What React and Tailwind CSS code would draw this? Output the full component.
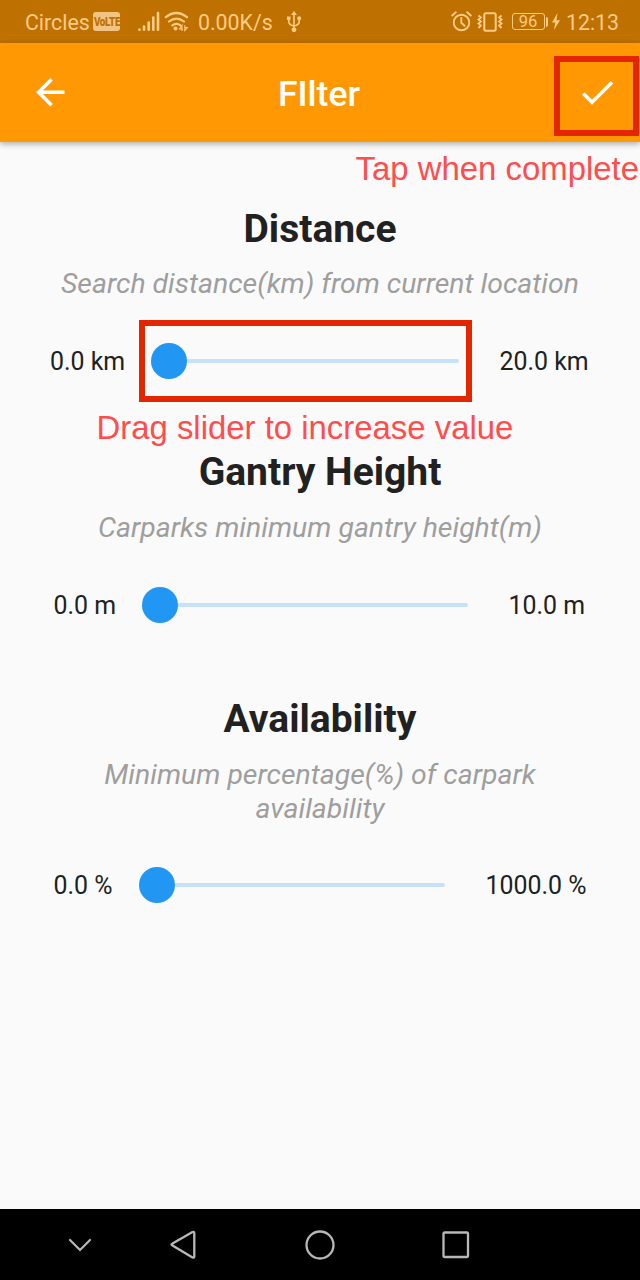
import { MdArrowBack, MdCheck } from 'react-icons/md';

function StatusBar() {
  return (
    <header className="flex h-[43px] shrink-0 items-center bg-[#bf7100] pl-[25px] text-[21.300px] leading-[43px] text-[#ffcb85]">
      <span className="w-[68px] whitespace-nowrap pt-[2px]">Circles</span>
      <span className="flex h-[19px] w-[27px] shrink-0 items-center justify-center rounded-[3px] bg-[#f3c384] text-[#bf7100]">
        <span className="scale-x-[0.82] scale-y-110 text-[12px] font-black leading-none tracking-[-0.4px]">VoLTE</span>
      </span>
      <svg className="ml-[18px] h-[21px] w-[22px] shrink-0" viewBox="0 0 22 21" stroke="currentColor" strokeWidth="2.6" strokeLinecap="round">
        <path d="M1.5 18.5v.3M6 15.5v3.3M10.7 11.5v7.3M15.3 6.5v12.3M20 2v16.8" />
      </svg>
      <svg className="ml-[4px] h-[22px] w-[25px] shrink-0" viewBox="0 0 25 22" fill="none" stroke="currentColor" strokeWidth="2.2" strokeLinecap="round">
        <path d="M1.8 6.2Q12.3-2.2 23 6.2M5 10.5q7.400-5.800 15 0M8.300 14.300q4.100-3 8.200 0" />
        <circle cx="11.500" cy="17.500" r="2" fill="currentColor" stroke="none" />
        <path d="M18 19.500v-5l-2.500 3.500h3M20.800 14.500v5l2.500-3h-2.500" strokeWidth="1.100" />
      </svg>
      <span className="ml-[9px] w-[75px] whitespace-nowrap pt-[2px]">0.00K/s</span>
      <svg className="ml-[13px] h-[22px] w-[16px] shrink-0" viewBox="0 0 16 22" fill="none" stroke="currentColor" strokeWidth="1.6">
        <path d="M8 3v16M2.800 7v3.500q0 3.500 5.200 4.500 5.200-1 5.200-4.500V7" />
        <path d="M8 0l3 4H5zM1 5.500h3.500v3.500H1z" fill="currentColor" stroke="none" />
        <circle cx="13.200" cy="7.300" r="2" fill="currentColor" stroke="none" />
        <circle cx="8" cy="18.800" r="2.400" fill="currentColor" stroke="none" />
      </svg>
      <div className="ml-auto flex items-center pr-[21px]">
        <svg className="h-[21px] w-[21px]" viewBox="0 0 21 21" fill="none" stroke="currentColor" strokeWidth="1.900" strokeLinecap="round">
          <circle cx="10.500" cy="11.500" r="7.800" />
          <path d="M10.300 7v4.800l3.200 3M1.200 4.500l3.600-3.200M19.800 4.500l-3.600-3.200" />
        </svg>
        <svg className="ml-[5px] h-[20px] w-[26px]" viewBox="0 0 26 20" fill="none" stroke="currentColor" strokeWidth="1.900">
          <rect x="7.300" y="1.200" width="11.400" height="17.600" rx="1.500" strokeWidth="2" />
          <path d="M1.500 3.500L3.800 5.500 1.500 7.500l2.300 2-2.300 2 2.300 2-2.300 2.500M24.500 3.500L22.200 5.500l2.300 2-2.300 2 2.300 2-2.300 2 2.300 2.500" />
        </svg>
        <span className="ml-[9px] flex h-[17px] w-[33px] items-center justify-center rounded-[3px] border border-[#ffcb85] pt-[1px] text-[16.500px] leading-none">
          96
        </span>
        <span className="ml-[1px] h-[10px] w-[2.500px] rounded-r-sm bg-[#ffcb85]" />
        <svg className="ml-[4px] h-[17px] w-[8px]" viewBox="0 0 8 17" fill="currentColor">
          <path d="M5.500 0L0 9.500h3.300L2 17l6-9.800H4.500z" />
        </svg>
        <span className="ml-[6px] w-[53px] whitespace-nowrap pt-[2px]">12:13</span>
      </div>
    </header>
  );
}

function AppBar() {
  return (
    <div className="z-10 flex h-[99px] shrink-0 items-center bg-[#ff9803] text-white shadow-[0_2px_6px_rgba(0,0,0,0.32)]">
      <button className="ml-[28.500px] flex h-[43px] w-[43px] items-center justify-center">
        <MdArrowBack size={42.700} />
      </button>
      <h1 className="ml-[71.500px] flex-1 pl-[54px] pt-[4px] text-center text-[35.500px] font-medium leading-none">
        FIlter
      </h1>
      <button className="ml-[113px] mr-[1.500px] mt-[6px] flex h-[80px] w-[84.500px] items-center justify-center border-[6.500px] border-[#e42600] pb-[6px] pl-[2px]">
        <MdCheck size={42.700} />
      </button>
    </div>
  );
}

function Heading({ children }) {
  return <h2 className="h-[46px] text-center text-[39px] font-bold leading-[46px] text-[#212121]">{children}</h2>;
}

function Hint({ className, children }) {
  return (
    <p className={'mx-auto w-[530px] text-center text-[28.400px] italic leading-[34px] text-[#9e9e9e] ' + className}>
      {children}
    </p>
  );
}

function Slider({ className }) {
  return (
    <div className={'flex h-9 items-center ' + className}>
      <span className="size-9 shrink-0 rounded-full bg-[#2196f3]" />
      <span className="h-[4px] flex-1 rounded-r-full bg-[#c5e2f9]" />
    </div>
  );
}

function Note({ className, children }) {
  return (
    <p className={"whitespace-nowrap font-['Liberation_Sans',sans-serif] text-[32.900px] text-[#ff4d4d] " + className}>
      {children}
    </p>
  );
}

function NavBar() {
  return (
    <nav className="flex h-[71px] shrink-0 items-center bg-black text-[#b8b8b8]">
      <svg className="ml-[68px] h-[14px] w-[24px]" viewBox="0 0 24 14" fill="none" stroke="currentColor" strokeWidth="2.200" strokeLinecap="round" strokeLinejoin="round">
        <path d="M2 2l10 10L22 2" />
      </svg>
      <svg className="ml-[77px] h-[30px] w-[28px]" viewBox="0 0 28 30" fill="none" stroke="currentColor" strokeWidth="2.300" strokeLinejoin="round">
        <path d="M2.500 14.500Q2.500 14 3.500 13.500L23.500 2q1.800-.7 1.800 1v23.500q0 1.700-1.800 1L3.500 15.500q-1-.5-1-1z" />
      </svg>
      <svg className="ml-[108px] h-[30px] w-[30px]" viewBox="0 0 30 30" fill="none" stroke="currentColor" strokeWidth="2.300">
        <circle cx="15" cy="15" r="13.500" />
      </svg>
      <svg className="ml-[107px] h-[28px] w-[28px]" viewBox="0 0 28 28" fill="none" stroke="currentColor" strokeWidth="2.300">
        <rect x="1.500" y="1.500" width="24.500" height="24.500" rx="1" />
      </svg>
    </nav>
  );
}

export default function App() {
  return (
    <div className="flex h-[1280px] w-[640px] flex-col overflow-hidden bg-[#fafafa] font-['Roboto',sans-serif]">
      <StatusBar />
      <AppBar />
      <main className="flex-1 text-[24.900px] leading-[36px] text-[#212121]">
        <Note className="h-[64px] pr-[1px] pt-[9px] text-right">Tap when complete</Note>

        <section>
          <Heading>Distance</Heading>
          <Hint className="mt-[15px]">Search distance(km) from current location</Hint>
          <div className="mt-[19px] flex h-[82px] items-center pl-[50px]">
            <span className="w-[88.500px] whitespace-nowrap pt-[2px]">0.0 km</span>
            <div className="flex h-full w-[333px] items-center border-[6.500px] border-[#e42600] pl-[6.500px] pr-[6.500px]">
              <Slider className="w-full" />
            </div>
            <span className="ml-[28px] whitespace-nowrap pt-[2px]">20.0 km</span>
          </div>
          <Note className="h-[47px] pl-[96.500px] pt-[8px]">Drag slider to increase value</Note>
        </section>

        <section>
          <Heading>Gantry Height</Heading>
          <Hint className="mt-[16px]">Carparks minimum gantry height(m)</Hint>
          <div className="mt-[41.500px] flex h-9 items-center pl-[53.500px]">
            <span className="w-[88.500px] whitespace-nowrap pt-[2px]">0.0 m</span>
            <Slider className="w-[326px]" />
            <span className="ml-[40.500px] whitespace-nowrap pt-[2px]">10.0 m</span>
          </div>
        </section>

        <section className="mt-[73.500px]">
          <Heading>Availability</Heading>
          <Hint className="mt-[16px]">Minimum percentage(%) of carpark availability</Hint>
          <div className="mt-[41px] flex h-9 items-center pl-[53.500px]">
            <span className="w-[85px] whitespace-nowrap pt-[2px]">0.0 %</span>
            <Slider className="w-[306px]" />
            <span className="ml-[41px] whitespace-nowrap pt-[2px]">1000.0 %</span>
          </div>
        </section>
      </main>
      <NavBar />
    </div>
  );
}
